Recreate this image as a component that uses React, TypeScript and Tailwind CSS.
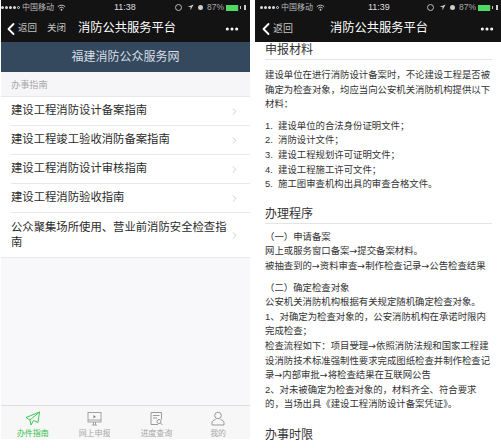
import { Fragment } from "react";
import type { ReactNode } from "react";
import { ChevronLeft, ChevronRight, MoreHorizontal } from "lucide-react";

const CJK = "font-['Liberation_Sans','Noto_Sans_CJK_SC',sans-serif]";

function StatusBar({ time, inset }: { time: string; inset: string }) {
  return (
    <div className={`h-[15px] flex items-center text-[8px] leading-[15px] text-[#bbbbbb] relative ${inset}`}>
      <div className="flex items-center gap-[1px]">
        {[0, 1, 2, 3].map((i) => (
          <span key={i} className="w-[3px] h-[3px] rounded-full bg-[#dddddd]" />
        ))}
        <span className="w-[3px] h-[3px] rounded-full border-[0.5px] border-[#dddddd]" />
      </div>
      <span className="ml-[2px]">中国移动</span>
      <svg width="9" height="7" viewBox="0 0 12 9" className="ml-[3px]">
        <path d="M1 3.5a7 7 0 0 1 10 0M3 5.5a4 4 0 0 1 6 0" stroke="#cccccc" strokeWidth="1.3" fill="none" />
        <circle cx="6" cy="7.5" r="1.2" fill="#cccccc" />
      </svg>
      <span className="ml-auto flex items-center">
        <span className="w-[7px] h-[7px] rounded-full border border-[#bbbbbb]" />
        <svg width="7" height="7" viewBox="0 0 8 8" className="ml-[5px]">
          <path d="M7.5.5 .5 3.5H4V7z" fill="#cccccc" />
        </svg>
        <span className="w-[5px] h-[5px] rounded-full bg-[#cccccc] ml-[4px]" />
        <span className="ml-[4px] text-[8.5px] text-[#aaaaaa]">87%</span>
        <span className="ml-[2px] w-[13px] h-[6px] bg-[#4cd964] border-r border-[#333333]" />
        <span className="ml-[1px] w-[1px] h-[3px] bg-[#cccccc]" />
        <span className="ml-[3px] w-[2px] h-[5px] bg-[#cccccc]" />
      </span>
      <span className="absolute left-[113px] text-[9px] text-[#dddddd]">{time}</span>
    </div>
  );
}

function GuideRow({ title, tall }: { title: string; tall?: boolean }) {
  return (
    <div className={`ml-[10px] pr-[10px] flex items-center border-b border-[#e8e8e8] last:border-b-0 ${tall ? "h-[44px]" : "h-[29px]"}`}>
      <span className="flex-1 text-[11.35px] leading-[15.5px] text-[#2b2b2b]">{title}</span>
      <ChevronRight size={11} strokeWidth={2} className="text-[#c8c8c8] shrink-0" />
    </div>
  );
}

function TabItem({ label, active, children }: { label: string; active?: boolean; children: ReactNode }) {
  return (
    <div className="flex-1 flex flex-col items-center">
      <div className="h-[19px] flex items-center">{children}</div>
      <span className={`text-[8px] leading-[10px] mt-[1px] ${active ? "text-[#2fc24a]" : "text-[#a8a8a8]"}`}>{label}</span>
    </div>
  );
}

function LeftScreen() {
  return (
    <div className="w-[249px] ml-[1px] h-[439px] flex flex-col bg-[#f8f8fb]">
      <div className="bg-[#131313] h-[42px] flex flex-col">
        <StatusBar time="11:38" inset="pr-[4px]" />
        <div className="flex-1 flex items-center text-white">
          <ChevronLeft size={20} strokeWidth={2.2} className="-mr-[3px]" />
          <span className="text-[9.5px] text-[#c4c4c4]">返回</span>
          <span className="text-[9.5px] text-[#c4c4c4] ml-[10px]">关闭</span>
          <span className="text-[12.25px] ml-[12px]">消防公共服务平台</span>
          <MoreHorizontal size={16} strokeWidth={2.6} className="ml-auto mr-[10px]" />
        </div>
      </div>
      <div className="bg-[#34495e] h-[30px] flex items-center justify-center text-[12px] text-[#d8dee4]">福建消防公众服务网</div>
      <div className="h-[25px] pl-[10px] pt-[3px] flex items-center text-[9.2px] text-[#a8a8a8] bg-[#f6f6f9] border-b border-[#e8e8e8]">办事指南</div>
      <div className="bg-white border-b border-[#e8e8e8]">
        <GuideRow title="建设工程消防设计备案指南" />
        <GuideRow title="建设工程竣工验收消防备案指南" />
        <GuideRow title="建设工程消防设计审核指南" />
        <GuideRow title="建设工程消防验收指南" />
        <GuideRow title="公众聚集场所使用、营业前消防安全检查指南" tall />
      </div>
      <div className="mt-auto h-[34px] bg-[#f7f7f7] border-t border-[#dddddd] flex pt-[3px] px-[1px]">
        <TabItem label="办件指南" active>
          <svg width="16" height="15" viewBox="0 0 16 15" fill="none" stroke="#2fc24a" strokeWidth="0.9">
            <path d="M14.5 1 1 6.5l4 2.5L14.5 1 13 11.5 8.5 9.5 6 14 5 9" />
          </svg>
        </TabItem>
        <TabItem label="网上申报">
          <svg width="15" height="15" viewBox="0 0 15 15" fill="none" stroke="#9a9a9a" strokeWidth="0.9">
            <rect x="1" y="1.5" width="13" height="9.5" />
            <path d="M1 9h13" />
            <path d="M6.5 4v3.5l1-1 1.5-.5z" fill="#777777" stroke="none" />
            <path d="M5 14h5M6.5 11v3M8.5 11v3" />
          </svg>
        </TabItem>
        <TabItem label="进度查询">
          <svg width="15" height="15" viewBox="0 0 15 15" fill="none" stroke="#8f8f8f" strokeWidth="0.9">
            <path d="M9 13.5H2V1.5h10.5v7" />
            <path d="M4 4.5h6.5M4 7h4" />
            <circle cx="10" cy="10.5" r="2" />
            <path d="m11.5 12 2 2" />
          </svg>
        </TabItem>
        <TabItem label="我的">
          <svg width="14" height="15" viewBox="0 0 14 15" fill="none" stroke="#8f8f8f" strokeWidth="0.9">
            <circle cx="7" cy="4.5" r="3.3" />
            <path d="M4.5 8.5C2.5 9 1 10 1 12v2h12v-2c0-2-1.5-3-3.5-3.5" />
          </svg>
        </TabItem>
      </div>
    </div>
  );
}

function SectionTitle({ children }: { children: string }) {
  return <h2 className="text-[12px] leading-[16px] text-[#333333] border-b border-[#e4e4e4] pb-[1px] font-normal">{children}</h2>;
}

// the arrows in the picture are narrower and darker than Liberation's
function Flow({ text }: { text: string }) {
  return (
    <>
      {text.split("→").map((part, i) => (
        <Fragment key={i}>
          {i > 0 && <span className="font-['DejaVu_Sans']">→</span>}
          {part}
        </Fragment>
      ))}
    </>
  );
}

const materials = [
  "建设单位的合法身份证明文件；",
  "消防设计文件；",
  "建设工程规划许可证明文件；",
  "建设工程施工许可文件；",
  "施工图审查机构出具的审查合格文件。",
];

function RightScreen() {
  const body = "text-[9.4px] leading-[14.6px] text-[#333333]";
  return (
    <div className="w-[246px] ml-[5px] h-[448px] flex flex-col overflow-hidden bg-white">
      <div className="bg-[#131313] h-[42px] flex flex-col shrink-0">
        <StatusBar time="11:39" inset="pl-[5px] pr-[3px]" />
        <div className="flex-1 flex items-center text-white">
          <ChevronLeft size={20} strokeWidth={2.2} className="ml-[1px] -mr-[3px]" />
          <span className="text-[10px] text-[#c4c4c4]">返回</span>
          <span className="text-[12.25px] ml-[37px]">消防公共服务平台</span>
          <MoreHorizontal size={16} strokeWidth={2.6} className="ml-auto mr-[6px]" />
        </div>
      </div>
      <div className="pl-[10px] pr-[9px]">
        <SectionTitle>申报材料</SectionTitle>
        <p className={`${body} mt-[8px]`}>建设单位在进行消防设计备案时，不论建设工程是否被确定为检查对象，均应当向公安机关消防机构提供以下材料：</p>
        <ol className={`${body} mt-[7px]`}>
          {materials.map((item, i) => (
            <li key={item} className="flex">
              <span className="w-[13px] shrink-0">{i + 1}.</span>
              <span>{item}</span>
            </li>
          ))}
        </ol>
        <div className="mt-[14px]">
          <SectionTitle>办理程序</SectionTitle>
        </div>
        <p className={`${body} mt-[6px]`}>（一）申请备案</p>
        <p className={body}><Flow text="网上或服务窗口备案→提交备案材料。" /></p>
        <p className={body}><Flow text="被抽查到的→资料审查→制作检查记录→公告检查结果" /></p>
        <p className={`${body} mt-[7px]`}>（二）确定检查对象</p>
        <p className={body}>公安机关消防机构根据有关规定随机确定检查对象。</p>
        <p className={body}>1、对确定为检查对象的，公安消防机构在承诺时限内完成检查；</p>
        <p className={body}><Flow text="检查流程如下：项目受理→依照消防法规和国家工程建设消防技术标准强制性要求完成图纸检查并制作检查记录→内部审批→将检查结果在互联网公告" /></p>
        <p className={body}>2、对未被确定为检查对象的，材料齐全、符合要求的，当场出具《建设工程消防设计备案凭证》。</p>
        <h2 className="text-[12px] leading-[16px] text-[#333333] font-normal mt-[15px]">办事时限</h2>
      </div>
    </div>
  );
}

export default function App() {
  return (
    <div className={`w-[501px] h-[448px] bg-white flex items-start overflow-hidden ${CJK}`}>
      <LeftScreen />
      <RightScreen />
    </div>
  );
}
